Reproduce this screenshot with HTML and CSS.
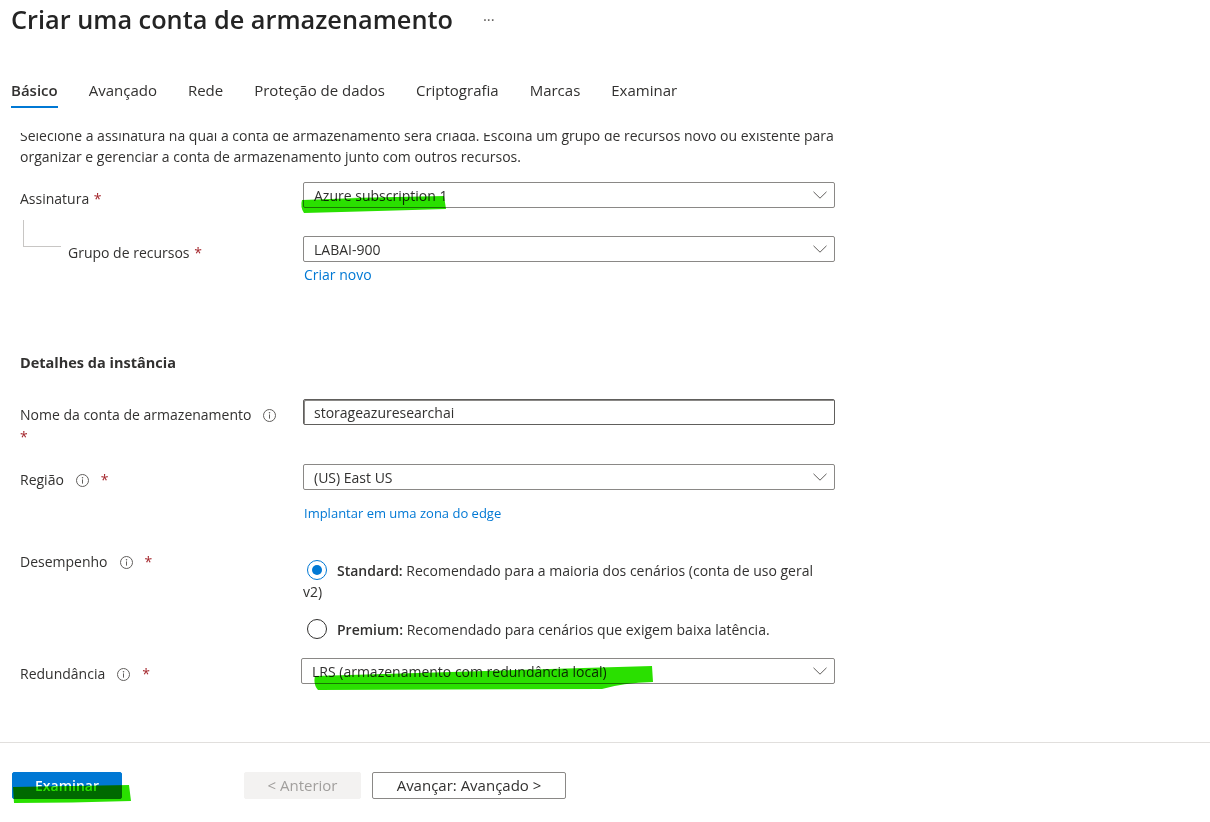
FILE: index.html
```html
<!DOCTYPE html>
<html lang="pt-BR">
<head>
<meta charset="utf-8">
<title>Criar uma conta de armazenamento</title>
<link rel="stylesheet" href="styles.css">
</head>
<body>
<div class="page">
  <header class="header">
    <div class="title-row">
      <h1 class="title">Criar uma conta de armazenamento</h1>
      <span class="more">···</span>
    </div>
    <nav class="tabs">
      <span class="tab active">Básico</span>
      <span class="tab">Avançado</span>
      <span class="tab">Rede</span>
      <span class="tab">Proteção de dados</span>
      <span class="tab">Criptografia</span>
      <span class="tab">Marcas</span>
      <span class="tab">Examinar</span>
    </nav>
  </header>

  <main class="scroll">
    <div class="content">
      <p class="desc">Selecione a assinatura na qual a conta de armazenamento será criada. Escolha um grupo de recursos novo ou existente para organizar e gerenciar a conta de armazenamento junto com outros recursos.</p>

      <div class="row row-sub">
        <div class="label">Assinatura <span class="req">*</span></div>
        <div class="control">
          <div class="select"><span>Azure subscription 1</span><svg class="chev" width="14" height="8" viewBox="0 0 14 8"><path d="M0.5 0.8l6.5 6.4 6.5-6.4" fill="none" stroke="#605e5c" stroke-width="1"/></svg></div>
        </div>
      </div>

      <div class="row row-rg">
        <div class="label label-child">Grupo de recursos <span class="req">*</span></div>
        <div class="control">
          <div class="select"><span>LABAI-900</span><svg class="chev" width="14" height="8" viewBox="0 0 14 8"><path d="M0.5 0.8l6.5 6.4 6.5-6.4" fill="none" stroke="#605e5c" stroke-width="1"/></svg></div>
          <a class="link">Criar novo</a>
        </div>
      </div>

      <h2 class="section">Detalhes da instância</h2>

      <div class="row row-name">
        <div class="label">Nome da conta de armazenamento<svg class="info" width="13" height="13" viewBox="0 0 13 13"><circle cx="6.5" cy="6.5" r="6" fill="none" stroke="#605e5c"/><rect x="6" y="5.4" width="1" height="4.2" fill="#605e5c"/><circle cx="6.5" cy="3.7" r="0.75" fill="#605e5c"/></svg><span class="req req-block">*</span></div>
        <div class="control">
          <div class="input">storageazuresearchai</div>
        </div>
      </div>

      <div class="row row-region">
        <div class="label">Região<svg class="info" width="13" height="13" viewBox="0 0 13 13"><circle cx="6.5" cy="6.5" r="6" fill="none" stroke="#605e5c"/><rect x="6" y="5.4" width="1" height="4.2" fill="#605e5c"/><circle cx="6.5" cy="3.7" r="0.75" fill="#605e5c"/></svg><span class="req">*</span></div>
        <div class="control">
          <div class="select"><span>(US) East US</span><svg class="chev" width="14" height="8" viewBox="0 0 14 8"><path d="M0.5 0.8l6.5 6.4 6.5-6.4" fill="none" stroke="#605e5c" stroke-width="1"/></svg></div>
          <a class="link link-small">Implantar em uma zona do edge</a>
        </div>
      </div>

      <div class="row row-perf">
        <div class="label label-top">Desempenho<svg class="info" width="13" height="13" viewBox="0 0 13 13"><circle cx="6.5" cy="6.5" r="6" fill="none" stroke="#605e5c"/><rect x="6" y="5.4" width="1" height="4.2" fill="#605e5c"/><circle cx="6.5" cy="3.7" r="0.75" fill="#605e5c"/></svg><span class="req">*</span></div>
        <div class="control control-radios">
          <div class="option"><span class="radio checked"></span><b>Standard:</b> Recomendado para a maioria dos cenários (conta de uso geral v2)</div>
          <div class="option option-2"><span class="radio"></span><b>Premium:</b> Recomendado para cenários que exigem baixa latência.</div>
        </div>
      </div>

      <div class="row row-red">
        <div class="label">Redundância<svg class="info" width="13" height="13" viewBox="0 0 13 13"><circle cx="6.5" cy="6.5" r="6" fill="none" stroke="#605e5c"/><rect x="6" y="5.4" width="1" height="4.2" fill="#605e5c"/><circle cx="6.5" cy="3.7" r="0.75" fill="#605e5c"/></svg><span class="req">*</span></div>
        <div class="control">
          <div class="select select-red"><span>LRS (armazenamento com redundância local)</span><svg class="chev" width="14" height="8" viewBox="0 0 14 8"><path d="M0.5 0.8l6.5 6.4 6.5-6.4" fill="none" stroke="#605e5c" stroke-width="1"/></svg></div>
        </div>
      </div>
    </div>
  </main>

  <footer class="footer">
    <button class="btn btn-primary">Examinar</button>
    <button class="btn btn-disabled">&lt; Anterior</button>
    <button class="btn btn-default">Avançar: Avançado &gt;</button>
  </footer>

  <svg class="marks" width="1210" height="822" viewBox="0 0 1210 822">
    <path d="M302 200 Q372 197 444 196 L446 209 Q380 211 304 213 Q300 207 302 200 Z" fill="#2ae000"/>
    <path d="M315 676 Q480 671 652 666 L653 682 Q622 683 602 689 L318 690 Q313 684 315 676 Z" fill="#2ae000"/>
    <path d="M13 787 L129 785 L131 801 Q72 803 14 803 Z" fill="#2ae000"/>
  </svg>
</div>
</body>
</html>
```

FILE: styles.css
```css
* {
  box-sizing: border-box;
  margin: 0;
  padding: 0;
}

html, body {
  height: 100%;
}

body {
  font-family: "Open Sans", "Noto Sans", sans-serif;
  font-size: 14px;
  color: #323130;
  background: #ffffff;
  overflow: hidden;
}

.page {
  position: relative;
  height: 822px;
  display: flex;
  flex-direction: column;
}

/* Header */
.header {
  flex: none;
  height: 133px;
}

.title-row {
  display: flex;
  align-items: center;
  padding: 1px 0 0 11px;
}

.title {
  font-size: 25.3px;
  font-weight: 600;
  line-height: 36px;
  color: #242424;
}

.more {
  margin-left: 30px;
  font-size: 15px;
  color: #605e5c;
}

.tabs {
  display: flex;
  gap: 31px;
  padding-left: 11px;
  margin-top: 43px;
}

.tab {
  font-size: 15px;
  line-height: 21px;
  padding-bottom: 5px;
  border-bottom: 2px solid transparent;
  color: #323130;
}

.tab.active {
  font-weight: 600;
  border-bottom-color: #0078d4;
}

/* Scrollable content */
.scroll {
  flex: 1;
  overflow: hidden;
}

.content {
  margin-top: -8px;
  padding-left: 20px;
  width: 860px;
}

.desc {
  line-height: 21px;
  width: 835px;
}

.row {
  display: flex;
  align-items: flex-start;
}

.label {
  position: relative;
  width: 283px;
  flex: none;
  padding-top: 6px;
  line-height: 21px;
}

.label-top {
  padding-top: 0;
}

.control {
  width: 532px;
  flex: none;
}

.req {
  color: #a4262c;
  margin-left: 1px;
}

.req-block {
  display: block;
  margin-left: 0;
}

.info {
  vertical-align: -2px;
  margin: 0 11px 0 12px;
}

.row-sub {
  margin-top: 15px;
}

.row-rg {
  margin-top: 27px;
}

.label-child {
  padding-left: 48px;
}

.label-child::before {
  content: "";
  position: absolute;
  left: 3px;
  top: -16px;
  width: 37px;
  height: 26px;
  border-left: 1px solid #c8c6c4;
  border-bottom: 1px solid #c8c6c4;
}

.select,
.input {
  height: 26px;
  border: 1px solid #8a8886;
  border-radius: 2px;
  display: flex;
  align-items: center;
  justify-content: space-between;
  padding: 0 7px 0 10px;
  background: #fff;
  line-height: 21px;
}

.input {
  border-color: #605e5c;
  box-shadow: inset 1px 1px 0 #8a8886;
}

.select-red {
  margin-left: -2px;
  width: 534px;
}

.chev {
  flex: none;
}

.link {
  display: block;
  color: #0078d4;
  line-height: 21px;
  margin-top: 2px;
  padding-left: 1px;
}

.link-small {
  font-size: 13px;
  margin-top: 12.5px;
}

.section {
  font-size: 14.5px;
  font-weight: 700;
  line-height: 21px;
  margin-top: 67px;
}

.row-name {
  margin-top: 26px;
}

.row-name .label {
  padding-top: 4.5px;
  line-height: 22px;
}

.row-region {
  margin-top: 16.5px;
}

.row-region .label {
  padding-top: 5px;
}

.row-perf {
  margin-top: 27px;
}

.control-radios {
  padding-top: 9px;
}

.option {
  line-height: 21px;
  padding-right: 4px;
}

.option b {
  font-weight: 600;
}

.option-2 {
  margin-top: 17px;
}

.radio {
  display: inline-block;
  width: 20px;
  height: 20px;
  border: 1px solid #323130;
  border-radius: 50%;
  vertical-align: top;
  margin: 0 10px 0 4px;
}

.radio.checked {
  border-color: #0078d4;
}

.radio.checked::after {
  content: "";
  display: block;
  width: 10px;
  height: 10px;
  margin: 4px;
  border-radius: 50%;
  background: #0078d4;
}

.row-red {
  margin-top: 18.5px;
}

.row-red .label {
  padding-top: 5px;
}

/* Footer */
.footer {
  flex: none;
  height: 80px;
  border-top: 1px solid #e1dfdd;
  padding: 29px 12px 0;
  display: flex;
  align-items: flex-start;
}

.btn {
  font-family: inherit;
  font-size: 15px;
  height: 27px;
  border-radius: 2px;
  border: 1px solid transparent;
  background: #fff;
  color: #323130;
  line-height: 21px;
}

.btn-primary {
  width: 110px;
  background: #0078d4;
  border-color: #0078d4;
  color: #fff;
  font-size: 14px;
  font-weight: 600;
}

.btn-disabled {
  width: 117px;
  margin-left: 122px;
  background: #f3f2f1;
  border-color: #f3f2f1;
  color: #a19f9d;
}

.btn-default {
  width: 194px;
  margin-left: 11px;
  border-color: #8a8886;
}

/* Highlighter annotations on top of the screenshot */
.marks {
  position: absolute;
  top: 0;
  left: 0;
  pointer-events: none;
  mix-blend-mode: multiply;
}
```
